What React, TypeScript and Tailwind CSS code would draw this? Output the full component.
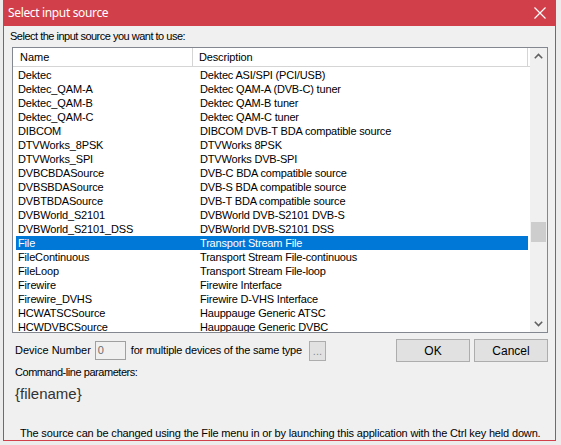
import React from 'react';

const rows: [string, string][] = [
  ['Dektec', 'Dektec ASI/SPI (PCI/USB)'],
  ['Dektec_QAM-A', 'Dektec QAM-A (DVB-C) tuner'],
  ['Dektec_QAM-B', 'Dektec QAM-B tuner'],
  ['Dektec_QAM-C', 'Dektec QAM-C tuner'],
  ['DIBCOM', 'DIBCOM DVB-T BDA compatible source'],
  ['DTVWorks_8PSK', 'DTVWorks 8PSK'],
  ['DTVWorks_SPI', 'DTVWorks DVB-SPI'],
  ['DVBCBDASource', 'DVB-C BDA compatible source'],
  ['DVBSBDASource', 'DVB-S BDA compatible source'],
  ['DVBTBDASource', 'DVB-T BDA compatible source'],
  ['DVBWorld_S2101', 'DVBWorld DVB-S2101 DVB-S'],
  ['DVBWorld_S2101_DSS', 'DVBWorld DVB-S2101 DSS'],
  ['File', 'Transport Stream File'],
  ['FileContinuous', 'Transport Stream File-continuous'],
  ['FileLoop', 'Transport Stream File-loop'],
  ['Firewire', 'Firewire Interface'],
  ['Firewire_DVHS', 'Firewire D-VHS Interface'],
  ['HCWATSCSource', 'Hauppauge Generic ATSC'],
  ['HCWDVBCSource', 'Hauppauge Generic DVBC'],
];

const selected = 'File';

function Chevron({ up }: { up?: boolean }) {
  return (
    <svg width="9" height="6" viewBox="0 0 9 6" className={up ? '' : 'rotate-180'}>
      <path d="M0.8 5.2 L4.5 1.5 L8.2 5.2" fill="none" stroke="#606060" strokeWidth="1.6" />
    </svg>
  );
}

export default function App() {
  return (
    <div className="w-[561px] h-[445px] bg-[#ececec] overflow-hidden font-['Liberation_Sans',Arial,sans-serif] text-[11px] text-black">
      <div className="ml-[3px] w-[553px] h-[441px] flex flex-col bg-[#f0f0f0] border border-t-0 border-[#d13f4a]">
        {/* title bar */}
        <div className="h-[26px] -mx-px bg-[#d13f4a] flex items-center justify-between pl-[5px] pr-[10px] text-white">
          <span className="font-['Noto_Sans',sans-serif] text-[12px] tracking-[-0.35px]">Select input source</span>
          <svg width="12" height="12" viewBox="0 0 12 12">
            <path d="M0.5 0.5 L11.5 11.5 M11.5 0.5 L0.5 11.5" stroke="white" strokeWidth="1.2" />
          </svg>
        </div>

        <div className="pl-[6px] mt-[4px] leading-[13px] tracking-[-0.5px]">Select the input source you want to use:</div>

        {/* list view */}
        <div className="ml-[8px] mt-[4px] w-[536px] h-[288px] border border-[#828790] bg-white flex overflow-hidden">
          <div className="flex-1 flex flex-col overflow-hidden">
            <div className="h-[19px] flex shrink-0 border-b border-[#d5d5d5] bg-white">
              <div className="w-[180px] pl-[7px] border-r border-[#d5d5d5] flex items-center">Name</div>
              <div className="w-[335px] pl-[6px] border-r border-[#d5d5d5] flex items-center tracking-[-0.15px]">Description</div>
            </div>
            <div className="pt-[1px] pl-[3px] pr-[2px]">
              {rows.map(([name, desc]) => (
                <div
                  key={name}
                  className={
                    'h-[14px] flex items-center leading-[14px] ' +
                    (name === selected ? 'bg-[#0078d7] text-white' : '')
                  }
                >
                  <div className="w-[181px] pl-[2px] whitespace-nowrap tracking-[-0.15px]">{name}</div>
                  <div className="pl-[3px] whitespace-nowrap tracking-[-0.18px]">{desc}</div>
                </div>
              ))}
            </div>
          </div>
          {/* scrollbar */}
          <div className="w-[17px] bg-[#f0f0f0] flex flex-col">
            <div className="h-[17px] flex items-center justify-center">
              <Chevron up />
            </div>
            <div className="flex-1 px-px">
              <div className="mt-[157px] h-[20px] bg-[#cdcdcd]" />
            </div>
            <div className="h-[17px] flex items-center justify-center">
              <Chevron />
            </div>
          </div>
        </div>

        {/* device number row */}
        <div className="mt-[6px] flex items-center h-[23px] pr-[7px]">
          <span className="pl-[11px]">Device Number</span>
          <div className="ml-[4px] w-[31px] h-[19px] border border-[#a0a0a0] bg-[#f0f0f0] text-[#6d6d6d] pl-[2px] flex items-center">0</div>
          <span className="ml-[5px] tracking-[-0.2px]">for multiple devices of the same type</span>
          <div className="ml-[7px] w-[17px] h-[20px] border border-[#adadad] bg-[#e1e1e1] text-[#8a8a8a] flex items-end justify-center pb-[3px] leading-none">...</div>
          <div className="ml-auto w-[74px] h-[23px] border border-[#adadad] bg-[#e1e1e1] flex items-center justify-center text-[12px]">OK</div>
          <div className="ml-[4px] w-[74px] h-[23px] border border-[#adadad] bg-[#e1e1e1] flex items-center justify-center text-[12px]">Cancel</div>
        </div>

        <div className="pl-[11px] mt-[4px] leading-[13px] tracking-[-0.45px]">Command-line parameters:</div>
        <div className="pl-[11px] mt-[5px] text-[15px] leading-[20px] text-[#333]">{'{filename}'}</div>

        <div className="pl-[16px] mt-[23px] leading-[13px] whitespace-nowrap tracking-[-0.16px]">
          The source can be changed using the File menu in or by launching this application with the Ctrl key held down.
        </div>
      </div>
    </div>
  );
}
